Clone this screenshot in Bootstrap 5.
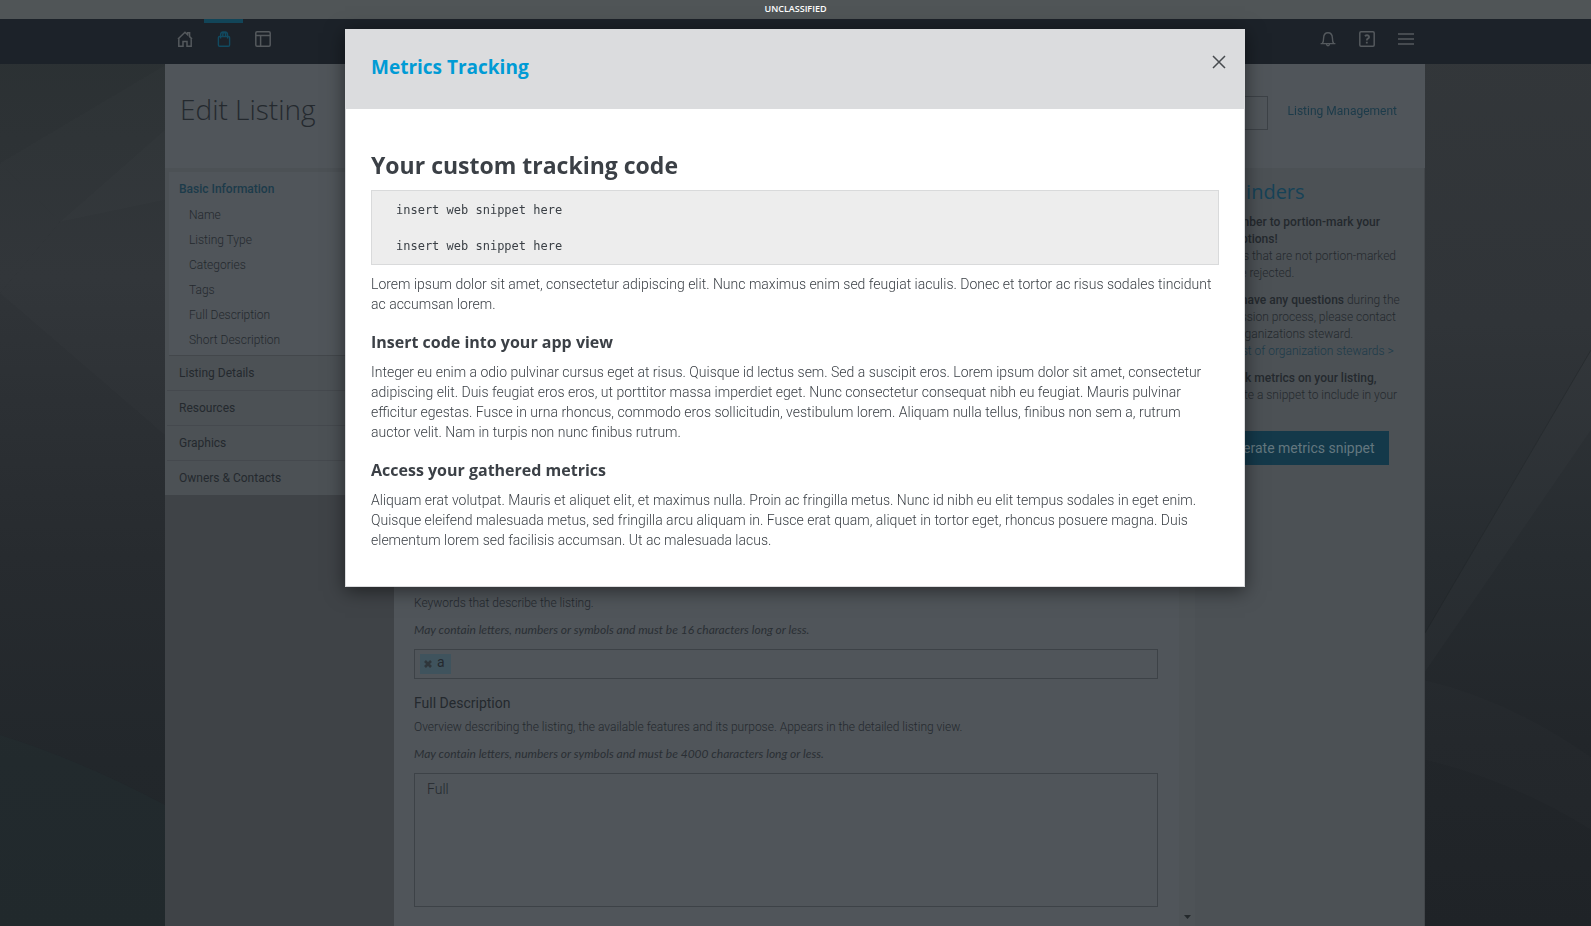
<!doctype html>
<html lang="en">
<head>
<meta charset="utf-8">
<meta name="viewport" content="width=device-width, initial-scale=1">
<title>Edit Listing</title>
<link href="https://cdn.jsdelivr.net/npm/bootstrap@5.3.0/dist/css/bootstrap.min.css" rel="stylesheet">
<style>
:root { --ink: #24292e; --accent: #1c3b4a; --panel: #50555a; --panel-alt: #4c5155; --rule: #45494e; }
body { font-family: Roboto, "Liberation Sans", sans-serif; font-size: 12px; line-height: 18px; font-weight: 300; color: var(--ink); background: #24292c; }
a { color: var(--accent); text-decoration: none; }
.display-face { font-family: "Open Sans", "Noto Sans", sans-serif; }
.backdrop-art { z-index: -1; }
.banner { height: 19px; background: #505557; color: #fff; font: 600 9px/17px "Open Sans", sans-serif; }
.topbar { height: 45px; background: #1c2229; }
.shell { width: 100%; max-width: 1261px; margin: 0 auto; padding-right: 1px; }
.topbar .tool { width: 39px; height: 45px; padding: 12px 0 0; border: 0; background: none; color: #54595d; line-height: 1; display: flex; justify-content: center; align-items: flex-start; }
.topbar .tool.current { color: #114a60; border-top: 4px solid #124558; padding-top: 8px; }
.page-head { height: 104px; background: var(--panel); padding: 0 28px 10px 15px; }
.page-head h1 { font-size: 28px; font-weight: 300; line-height: 36px; }
.finder { width: 220px; height: 34px; background: transparent; border: 1px solid #3d4247; border-radius: 0; }
.page-head a { font-weight: 400; }
.side { width: 229px; background: #3f4347; }
.side .sections { background: var(--panel-alt); padding: 4px 0 0 2px; }
.side .group > a { display: block; padding: 8px 12px; line-height: 18px; border-bottom: 1px solid var(--rule); color: var(--ink); font-weight: 400; }
.side .group:last-child > a { border-bottom: 0; }
.side .active-group { margin-left: 2px; background: var(--panel); border-bottom: 1px solid #43474b; padding: 8px 0 2px 10px; }
.side .active-group > a { padding: 0 0 5px; border: 0; color: var(--accent); font-weight: 500; }
.side .active-group .sub a { display: block; line-height: 25px; padding-left: 10px; color: var(--ink); }
.form-col { background: var(--panel); padding: 17px 21px 0 20px; }
.field { margin-bottom: 14px; }
.field label { display: block; font-size: 14px; line-height: 20px; font-weight: 400; margin-bottom: 5px; }
.field .about { margin-bottom: 9px; }
.field .limit { margin-bottom: 10px; font-family: Lato, sans-serif; font-style: italic; font-weight: 400; color: #2a2f34; }
.field .form-control { height: 34px; background: transparent; border: 1px solid #3d4247; border-radius: 0; color: var(--ink); font-size: 14px; line-height: 20px; font-weight: 300; padding: 5px 12px; box-shadow: none; }
.field .tags-box { height: 30px; padding: 4px 5px; }
.tags-box input { border: 0; background: transparent; outline: 0; min-width: 0; }
.field textarea.form-control { height: 134px; resize: none; }
.field textarea.brief { height: 114px; }
.tag { background: #3f535d; height: 20px; padding: 0 6px 0 4px; gap: 5px; font-weight: 400; line-height: 18px; }
.tag button { border: 0; padding: 0; background: none; color: #2f363b; line-height: 0; }
.track { width: 16px; background: #4e5357; padding-bottom: 7px; }
.aside-col { width: 230px; background: var(--panel-alt); padding: 10px 9px; border-right: 1px solid #43474b; }
.aside-col h2 { color: #164257; font-size: 20px; line-height: 28px; font-weight: 400; margin-bottom: 8px; }
.aside-col p { line-height: 17px; margin-bottom: 10px; padding-left: 4px; white-space: nowrap; }
.aside-col strong { font-weight: 500; }
.aside-col .btn { background: #14394a; color: #63777f; border: 0; border-radius: 0; height: 34px; width: 185px; padding: 0; font-size: 14px; font-weight: 400; }
.metrics { padding-right: 1px; }
.metrics .modal-dialog { max-width: 900px; margin: 29px auto 0; }
.metrics .modal-content { border: 1px solid #dbdcde; border-radius: 0; box-shadow: 0 4px 18px rgba(0,0,0,.5); color: #3b4046; font-size: 14px; line-height: 20px; }
.metrics .modal-header { background: #dbdcde; border: 0; border-radius: 0; height: 79px; padding: 0 18px 5px 25px; }
.metrics .modal-title { color: #009bd5; font-size: 19px; line-height: 28px; font-weight: 700; }
.metrics .shut { border: 0; background: none; padding: 0 0 10px; color: #474b4f; line-height: 0; }
.metrics .modal-body { padding: 41px 25px 36px; }
.metrics h3 { font-size: 23px; line-height: 30px; font-weight: 700; margin-bottom: 10px; }
.metrics h4 { font-size: 16px; line-height: 24px; font-weight: 700; margin: 16px 0 8px; }
.metrics pre { background: #ededed; border: 1px solid #d9dadb; padding: 10px 24px 9px; margin-bottom: 9px; font: 12px/18px "DejaVu Sans Mono", monospace; color: #3b4046; }
.metrics p { margin: 0; }
</style>
</head>
<body class="vh-100 overflow-hidden d-flex flex-column">
<svg class="backdrop-art position-fixed top-0 start-0 w-100 h-100" viewBox="0 0 1591 926" preserveAspectRatio="none" aria-hidden="true">
  <defs>
    <linearGradient id="sky" x1="0" y1="0" x2="0" y2="1"><stop offset="0" stop-color="#2a3032"/><stop offset=".3" stop-color="#303438"/><stop offset=".6" stop-color="#272b2f"/><stop offset=".82" stop-color="#22272b"/><stop offset="1" stop-color="#212629"/></linearGradient>
    <linearGradient id="east" x1="0" y1="0" x2="0" y2="1"><stop offset="0" stop-color="#33373a"/><stop offset=".35" stop-color="#303438"/><stop offset=".6" stop-color="#272c30"/><stop offset=".8" stop-color="#22262a"/><stop offset="1" stop-color="#1f2327"/></linearGradient>
  </defs>
  <rect width="1591" height="926" fill="url(#sky)"/>
  <rect x="1400" width="191" height="926" fill="url(#east)"/>
  <g fill="#fff" fill-opacity=".01">
    <path d="M0 163L165 65V200L60 222Z"/>
    <path d="M0 293L60 222L165 130V435Z"/>
    <path d="M0 163L60 222L0 293Z"/>
    <path d="M1425 633L1514 480L1591 350V430L1425 672Z" fill-opacity=".015"/>
    <path d="M1425 680Q1510 700 1591 757V830Q1510 780 1425 760Z"/>
  </g>
  <path d="M0 735Q80 760 165 805V926H0Z" fill="#243033" fill-opacity=".4"/>
  <path d="M1425 633L1591 350" stroke="#1f2326" stroke-opacity=".4"/>
</svg>

<div class="banner text-center flex-shrink-0">UNCLASSIFIED</div>

<nav class="topbar flex-shrink-0" aria-label="Main">
  <div class="shell d-flex">
    <a class="tool" href="#" aria-label="Home"><svg width="16" height="16" viewBox="0 0 16 16" fill="none" stroke="currentColor" stroke-width="1.5"><path d="M1.8 7.2V15.2H6V10.5H10V15.2H14.2V7.2M1 8L8 1.2L10.6 3.7V1.8H12.6V5.6L15 8"/></svg></a>
    <a class="tool current" href="#" aria-label="Center"><svg width="16" height="16" viewBox="0 0 16 16" fill="none" stroke="currentColor" stroke-width="1.4"><rect x="2.4" y="5.5" width="11.2" height="9.8" rx="1.2"/><path d="M4.6 7.5V4Q4.6 1 7.2 1Q9.6 1 9.6 4V5.5M6.8 5.5V3.6Q7 1 9 1Q11.6 1 11.6 4V7.5"/></svg></a>
    <a class="tool" href="#" aria-label="Webtop"><svg width="16" height="16" viewBox="0 0 16 16" fill="none" stroke="currentColor" stroke-width="1.5"><rect x=".8" y=".8" width="14.4" height="14.4" rx="1.2"/><path d="M1 4.6H15M5.6 4.6V15"/></svg></a>
    <button type="button" class="tool ms-auto" aria-label="Notifications"><svg width="16" height="16" viewBox="0 0 16 16" fill="none" stroke="currentColor" stroke-width="1.4"><path d="M.6 12.6H15.4M2.3 12.5Q3.6 11 3.6 7Q3.8 1.7 8 1.7Q12.2 1.7 12.4 7Q12.4 11 13.7 12.5M6.5 13Q6.7 14.8 8 14.8Q9.3 14.8 9.5 13"/></svg></button>
    <button type="button" class="tool" aria-label="Help"><svg width="16" height="16" viewBox="0 0 16 16" fill="none" stroke="currentColor" stroke-width="1.5"><rect x=".8" y=".8" width="14.4" height="14.4" rx="1.2"/><path d="M5.8 5Q8 3.6 9.6 4.8Q10.8 6.6 8.8 7.6Q7.8 8.1 7.8 9.6M7.8 10.8V12.4" stroke-width="1.8"/></svg></button>
    <button type="button" class="tool" aria-label="Menu"><svg width="16" height="16" viewBox="0 0 16 16" fill="none" stroke="currentColor" stroke-width="1.7"><path d="M0 3H16M0 8H16M0 13H16"/></svg></button>
  </div>
</nav>

<div class="shell flex-grow-1 d-flex flex-column overflow-hidden">
  <header class="page-head d-flex align-items-center flex-shrink-0">
    <h1 class="display-face m-0 me-auto pb-1">Edit Listing</h1>
    <input class="form-control finder me-3 mt-1" type="text" aria-label="Status">
    <a href="#" class="ms-1">Listing Management</a>
  </header>
  <div class="d-flex flex-grow-1 overflow-hidden">
    <nav class="side flex-shrink-0" aria-label="Sections">
      <ul class="sections list-unstyled m-0">
        <li class="group active-group">
          <a href="#">Basic Information</a>
          <ul class="sub list-unstyled">
            <li><a href="#">Name</a></li>
            <li><a href="#">Listing Type</a></li>
            <li><a href="#">Categories</a></li>
            <li><a href="#">Tags</a></li>
            <li><a href="#">Full Description</a></li>
            <li><a href="#">Short Description</a></li>
          </ul>
        </li>
        <li class="group"><a href="#">Listing Details</a></li>
        <li class="group"><a href="#">Resources</a></li>
        <li class="group"><a href="#">Graphics</a></li>
        <li class="group"><a href="#">Owners &amp; Contacts</a></li>
      </ul>
    </nav>
    <main class="form-col flex-grow-1 overflow-hidden">
      <div class="field"><textarea class="form-control brief" aria-label="Name"></textarea></div>
      <div class="field"><textarea class="form-control brief" aria-label="Listing Type"></textarea></div>
      <div class="field"><textarea class="form-control brief" aria-label="Categories"></textarea></div>
      <div class="field">
        <label for="tags">Tags</label>
        <p class="about">Keywords that describe the listing.</p>
        <p class="limit">May contain letters, numbers or symbols and must be 16 characters long or less.</p>
        <div class="form-control tags-box d-flex">
          <span class="tag d-flex align-items-center"><button type="button" aria-label="Remove a"><svg width="8" height="8" viewBox="0 0 8 8" stroke="currentColor" stroke-width="2.6"><path d="M1 1L7 7M7 1L1 7"/></svg></button><span class="pb-1">a</span></span>
          <input id="tags" type="text" class="flex-grow-1">
        </div>
      </div>
      <div class="field mb-3">
        <label for="full">Full Description</label>
        <p class="about">Overview describing the listing, the available features and its purpose. Appears in the detailed listing view.</p>
        <p class="limit">May contain letters, numbers or symbols and must be 4000 characters long or less.</p>
        <textarea id="full" class="form-control">Full</textarea>
      </div>
      <div class="field"><label for="short">Short Description</label><input id="short" class="form-control" type="text"></div>
    </main>
    <div class="track flex-shrink-0 d-flex align-items-end justify-content-center" aria-hidden="true"><svg width="7" height="4" viewBox="0 0 7 4"><path d="M0 0H7L3.5 4Z" fill="#24292c"/></svg></div>
    <aside class="aside-col flex-shrink-0 overflow-hidden">
      <h2 class="display-face">Reminders</h2>
      <p><strong>Remember to portion-mark your<br>descriptions!</strong><br>Listings that are not portion-marked<br>may be rejected.</p>
      <p><strong>If you have any questions</strong> during the<br>submission process, please contact<br>your organizations steward.<br><a href="#">View list of organization stewards &gt;</a></p>
      <p><strong>To track metrics on your listing,</strong><br>generate a snippet to include in your<br>listing.</p>
      <button type="button" class="btn">Generate metrics snippet</button>
    </aside>
  </div>
</div>

<div class="modal metrics d-block" role="dialog" aria-modal="true" aria-labelledby="metrics-title">
  <div class="modal-dialog">
    <div class="modal-content">
      <div class="modal-header">
        <h2 class="modal-title display-face" id="metrics-title">Metrics Tracking</h2>
        <button type="button" class="shut" aria-label="Close"><svg width="14" height="14" viewBox="0 0 14 14" stroke="currentColor" stroke-width="1.5"><path d="M1 1L13 13M13 1L1 13"/></svg></button>
      </div>
      <div class="modal-body">
        <h3 class="display-face">Your custom tracking code</h3>
        <pre>insert web snippet here

insert web snippet here</pre>
        <p>Lorem ipsum dolor sit amet, consectetur adipiscing elit. Nunc maximus enim sed feugiat iaculis. Donec et tortor ac risus sodales tincidunt ac accumsan lorem.</p>
        <h4 class="display-face">Insert code into your app view</h4>
        <p>Integer eu enim a odio pulvinar cursus eget at risus. Quisque id lectus sem. Sed a suscipit eros. Lorem ipsum dolor sit amet, consectetur adipiscing elit. Duis feugiat eros eros, ut porttitor massa imperdiet eget. Nunc consectetur consequat nibh eu feugiat. Mauris pulvinar efficitur egestas. Fusce in urna rhoncus, commodo eros sollicitudin, vestibulum lorem. Aliquam nulla tellus, finibus non sem a, rutrum auctor velit. Nam in turpis non nunc finibus rutrum.</p>
        <h4 class="display-face">Access your gathered metrics</h4>
        <p>Aliquam erat volutpat. Mauris et aliquet elit, et maximus nulla. Proin ac fringilla metus. Nunc id nibh eu elit tempus sodales in eget enim. Quisque eleifend malesuada metus, sed fringilla arcu aliquam in. Fusce erat quam, aliquet in tortor eget, rhoncus posuere magna. Duis elementum lorem sed facilisis accumsan. Ut ac malesuada lacus.</p>
      </div>
    </div>
  </div>
</div>
<script src="https://cdn.jsdelivr.net/npm/bootstrap@5.3.0/dist/js/bootstrap.bundle.min.js"></script>
</body>
</html>
